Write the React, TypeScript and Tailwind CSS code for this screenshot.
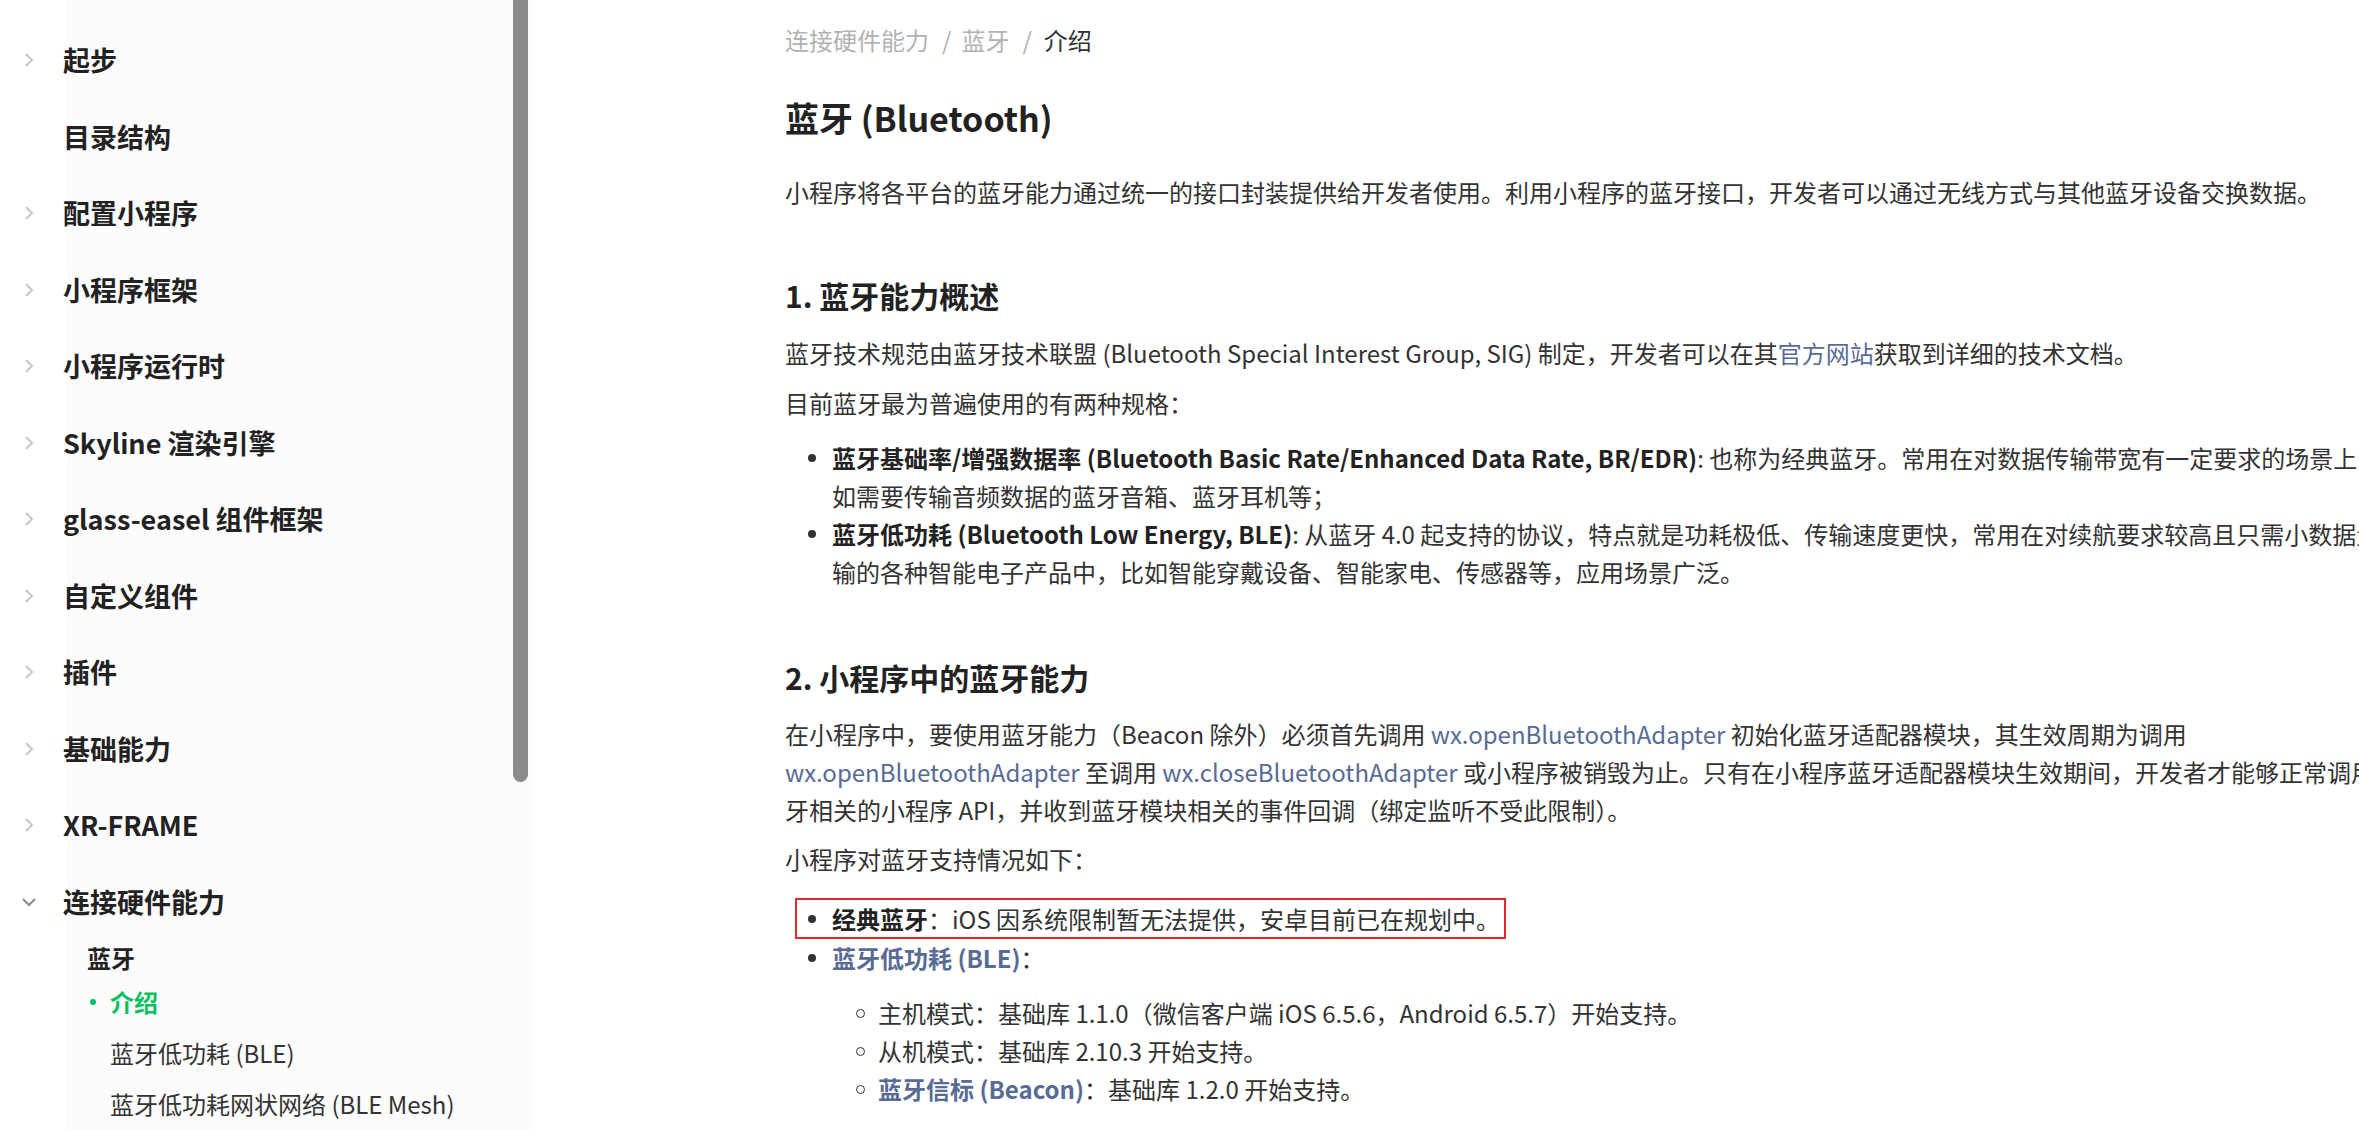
import React from 'react';

const navItems = [
	{ label: '起步', arrow: true },
	{ label: '目录结构', arrow: false },
	{ label: '配置小程序', arrow: true },
	{ label: '小程序框架', arrow: true },
	{ label: '小程序运行时', arrow: true },
	{ label: 'Skyline 渲染引擎', arrow: true },
	{ label: 'glass-easel 组件框架', arrow: true },
	{ label: '自定义组件', arrow: true },
	{ label: '插件', arrow: true },
	{ label: '基础能力', arrow: true },
	{ label: 'XR-FRAME', arrow: true },
];

const ChevronRight = () => (
	<svg width="10" height="16" viewBox="0 0 10 16" fill="none">
		<path d="M2 2l6 6-6 6" stroke="#c8c8c8" strokeWidth="2" />
	</svg>
);

const ChevronDown = () => (
	<svg width="16" height="10" viewBox="0 0 16 10" fill="none">
		<path d="M2 2l6 6 6-6" stroke="#8a8a8a" strokeWidth="2" />
	</svg>
);

const Link: React.FC<{ children: React.ReactNode; bold?: boolean }> = ({
	children,
	bold,
}) => (
	<a className={bold ? 'text-[#576b95] font-bold' : 'text-[#576b95]'}>
		{children}
	</a>
);

const Dot = () => (
	<span className="w-[47px] shrink-0 h-[38px] flex items-center pl-[23px]">
		<span className="w-[8px] h-[8px] rounded-full bg-[#333]" />
	</span>
);

const Circle = () => (
	<span className="w-[46px] shrink-0 h-[38px] flex items-center pl-[24px]">
		<span className="w-[9px] h-[9px] rounded-full border-[1.5px] border-[#333]" />
	</span>
);

const Sidebar = () => (
	<aside className="relative w-[533px] shrink-0 h-full bg-[linear-gradient(to_right,#ffffff_66px,#fcfcfc_66px)]">
		<div className="pt-[22px]">
			{navItems.map((item) => (
				<div key={item.label} className="h-[76.5px] flex items-center">
					<span className="w-[63px] pl-[24px] flex items-center">
						{item.arrow && <ChevronRight />}
					</span>
					<span className="text-[27px] font-bold text-[#222]">{item.label}</span>
				</div>
			))}
			<div className="h-[76.5px] flex items-center">
				<span className="w-[63px] pl-[21px] flex items-center">
					<ChevronDown />
				</span>
				<span className="text-[27px] font-bold text-[#222]">连接硬件能力</span>
			</div>
			<div className="h-[36px] flex items-center pl-[87px] text-[24px] font-bold text-[#222]">
				蓝牙
			</div>
			<div className="h-[51px] flex items-center text-[24px]">
				<span className="w-[110px] pl-[90px] flex items-center">
					<span className="w-[6px] h-[6px] rounded-full bg-[#07c160]" />
				</span>
				<span className="font-bold text-[#07c160]">介绍</span>
			</div>
			<div className="h-[51px] flex items-center pl-[110px] text-[24px] text-[#333]">
				蓝牙低功耗 (BLE)
			</div>
			<div className="h-[51px] flex items-center pl-[110px] text-[24px] text-[#333]">
				蓝牙低功耗网状网络 (BLE Mesh)
			</div>
		</div>
		<div className="absolute left-[513px] -top-[10px] w-[15px] h-[792px] rounded-full bg-[#8b8b8b]" />
	</aside>
);

const Content = () => (
	<main className="w-[1878px] shrink-0 pl-[252px] pt-[21px] text-[24px] leading-[38px] text-[#333]">
		<div className="w-[1626px]">
			<nav className="flex items-center h-[38px]">
				<span className="text-[#b2b2b2]">连接硬件能力</span>
				<span className="text-[#b2b2b2] pl-[13px] pr-[10px]">/</span>
				<span className="text-[#b2b2b2]">蓝牙</span>
				<span className="text-[#b2b2b2] pl-[13px] pr-[12px]">/</span>
				<span className="text-[#333]">介绍</span>
			</nav>

			<h1 className="mt-[36px] text-[34px] leading-[46px] font-bold text-[#222]">
				蓝牙 (Bluetooth)
			</h1>
			<p className="mt-[32px]">
				小程序将各平台的蓝牙能力通过统一的接口封装提供给开发者使用。利用小程序的蓝牙接口，开发者可以通过无线方式与其他蓝牙设备交换数据。
			</p>

			<h2 className="mt-[63px] text-[30px] leading-[42px] font-bold text-[#222]">
				1. 蓝牙能力概述
			</h2>
			<p className="mt-[18px]">
				蓝牙技术规范由蓝牙技术联盟 (Bluetooth Special Interest Group, SIG)
				制定，开发者可以在其<Link>官方网站</Link>获取到详细的技术文档。
			</p>
			<p className="mt-[12px]">目前蓝牙最为普遍使用的有两种规格：</p>
			<ul className="mt-[17px]">
				<li className="flex">
					<Dot />
					<span>
						<strong className="text-[#222]">
							蓝牙基础率/增强数据率 (Bluetooth Basic Rate/Enhanced Data Rate, BR/EDR)
						</strong>
						: 也称为经典蓝牙。常用在对数据传输带宽有一定要求的场景上，
						<br />
						如需要传输音频数据的蓝牙音箱、蓝牙耳机等；
					</span>
				</li>
				<li className="flex">
					<Dot />
					<span>
						<strong className="text-[#222]">蓝牙低功耗 (Bluetooth Low Energy, BLE)</strong>:
						从蓝牙 4.0
						起支持的协议，特点就是功耗极低、传输速度更快，常用在对续航要求较高且只需小数据量传输的各种智能电子产品中，比如智能穿戴设备、智能家电、传感器等，应用场景广泛。
					</span>
				</li>
			</ul>

			<h2 className="mt-[65px] text-[30px] leading-[42px] font-bold text-[#222]">
				2. 小程序中的蓝牙能力
			</h2>
			<p className="mt-[17px]">
				在小程序中，要使用蓝牙能力（Beacon 除外）必须首先调用{' '}
				<Link>wx.openBluetoothAdapter</Link> 初始化蓝牙适配器模块，其生效周期为调用{' '}
				<Link>wx.openBluetoothAdapter</Link> 至调用 <Link>wx.closeBluetoothAdapter</Link>{' '}
				或小程序被销毁为止。只有在小程序蓝牙适配器模块生效期间，开发者才能够正常调用蓝牙相关的小程序
				API，并收到蓝牙模块相关的事件回调（绑定监听不受此限制）。
			</p>
			<p className="mt-[11px]">小程序对蓝牙支持情况如下：</p>
			<ul className="mt-[16px]">
				<li>
					<div className="relative inline-flex">
						<span className="absolute left-[10px] -right-[6px] -top-[2px] -bottom-[1px] border-2 border-[#e3262b]" />
						<Dot />
						<span>
							<strong className="text-[#222]">经典蓝牙</strong>：iOS
							因系统限制暂无法提供，安卓目前已在规划中。
						</span>
					</div>
				</li>
				<li className="mt-[1px]">
					<div className="flex">
						<Dot />
						<span>
							<Link bold>蓝牙低功耗 (BLE)</Link>：
						</span>
					</div>
					<ul className="mt-[17px] pl-[47px]">
						<li className="flex">
							<Circle />
							<span>主机模式：基础库 1.1.0（微信客户端 iOS 6.5.6，Android 6.5.7）开始支持。</span>
						</li>
						<li className="flex">
							<Circle />
							<span>从机模式：基础库 2.10.3 开始支持。</span>
						</li>
						<li className="flex">
							<Circle />
							<span>
								<Link bold>蓝牙信标 (Beacon)</Link>：基础库 1.2.0 开始支持。
							</span>
						</li>
					</ul>
				</li>
			</ul>
		</div>
	</main>
);

export default function App() {
	return (
		<div className="w-[2359px] h-[1130px] overflow-hidden flex bg-white font-['Noto_Sans_CJK_SC',sans-serif]">
			<Sidebar />
			<Content />
		</div>
	);
}
